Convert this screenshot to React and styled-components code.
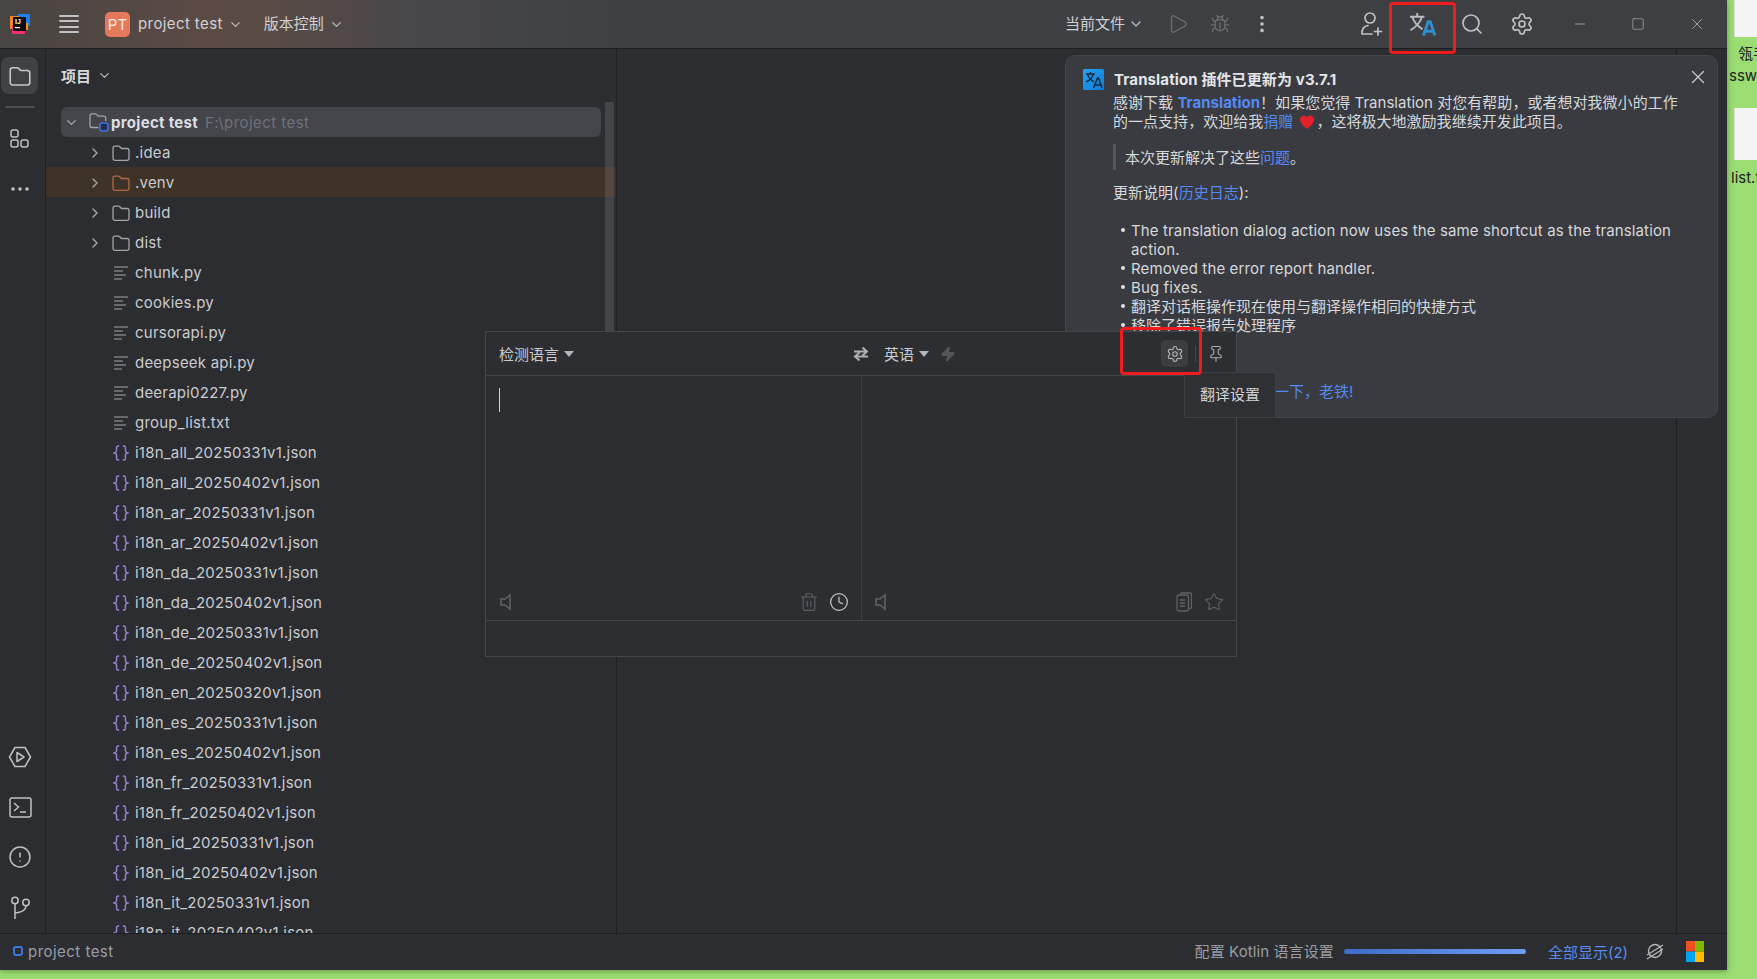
import React from 'react';
import styled, { createGlobalStyle } from 'styled-components';
import { Play, Bug, EllipsisVertical, Search, Settings, Minus, Square, X, ChevronDown, ChevronRight, CircleAlert, Trash2, Clock, Star, Pin, Zap } from 'lucide-react';

const FONT = '"Inter","Noto Sans CJK SC",sans-serif';

const Global = createGlobalStyle`
  html, body { margin: 0; padding: 0; height: 100%; overflow: hidden; background: #9bdd73; }
  body { font-family: ${FONT}; }
  #root { height: 100%; }
  * { box-sizing: border-box; }
  svg { flex: none; }
`;

const Page = styled.div`
  display: flex;
  width: 1757px;
  height: 979px;
  background: #9bdd73;
  overflow: hidden;
`;
const Win = styled.div`
  position: relative;
  flex: 0 0 1727px;
  height: 970px;
  display: flex;
  flex-direction: column;
  background: #2b2d30;
  color: #c6c8ce;
  font-size: 15px;
  box-shadow: 0 1px 6px rgba(30, 60, 20, 0.45);
  overflow: hidden;
`;
const Desktop = styled.div`
  position: relative;
  flex: 1;
  overflow: hidden;
  color: #222;
  font-size: 15px;
`;
const Thumb = styled.div`
  position: absolute;
  left: 7px;
  width: 30px;
  top: ${p => p.$top}px;
  height: ${p => p.$h}px;
  background: #f4f4f4;
  border-left: 1px solid #ddd;
`;
const DeskLabel = styled.span`
  position: absolute;
  left: ${p => p.$left}px;
  top: ${p => p.$top}px;
  line-height: 20px;
  white-space: nowrap;
`;

/* title bar */
const TitleBar = styled.header`
  flex: 0 0 49px;
  display: flex;
  align-items: center;
  padding-left: 10px;
  border-bottom: 1px solid #1e1f22;
  background: linear-gradient(90deg, #474442 0, #5b4a44 200px, #5a4b45 260px, #47474a 420px, #3d3f43 640px, #3d3f43 100%);
  color: #cfd1d5;
`;
const Hamburger = styled.span`
  flex: none;
  margin-left: 29px;
  width: 20px;
  height: 19px;
  display: flex;
  flex-direction: column;
  justify-content: space-between;
  & > i { display: block; height: 2px; background: #bfc1c5; border-radius: 1px; }
`;
const Avatar = styled.span`
  flex: none;
  margin-left: 26px;
  width: 25px;
  height: 25px;
  border-radius: 5px;
  background: #e5795c;
  color: #fbe9e2;
  font-size: 15px;
  display: flex;
  align-items: center;
  justify-content: center;
`;
const TitleText = styled.span`
  flex: none;
  margin-left: ${p => p.$ml || 0}px;
  white-space: nowrap;
  line-height: 20px;
  ${p => p.$ls ? `letter-spacing: ${p.$ls}px;` : ''}
`;
const Caret = styled(ChevronDown)`
  margin-left: ${p => p.$ml || 4}px;
  color: #b8babe;
  flex: none;
`;
const TitleIcon = styled.span`
  position: relative;
  flex: 0 0 ${p => p.$w}px;
  display: flex;
  align-items: center;
  justify-content: center;
  color: ${p => p.$dim ? '#6c6e72' : '#bfc1c5'};
`;
const TitleSpacer = styled.div`flex: 0 0 ${p => p.$w}px;`;
const TitlePush = styled.div`flex: 1;`;

/* main row */
const Main = styled.div`
  flex: 1;
  min-height: 0;
  display: flex;
`;
const Rail = styled.nav`
  flex: 0 0 46px;
  display: flex;
  flex-direction: column;
  align-items: center;
  padding: 8px 5px 0 0;
  border-right: 1px solid #1e1f22;
  color: #bfc1c5;
`;
const RailActive = styled.span`
  width: 37px;
  height: 37px;
  border-radius: 8px;
  background: #404246;
  display: flex;
  align-items: center;
  justify-content: center;
  margin-left: -1px;
`;
const RailRule = styled.i`
  display: block;
  width: 30px;
  height: 2px;
  margin-top: 12px;
  background: #4b4d51;
`;
const RailBtn = styled.span`
  display: flex;
  align-items: center;
  justify-content: center;
  height: 24px;
  margin-top: ${p => p.$mt || 0}px;
`;
const RailPush = styled.div`flex: 1;`;
const RailFoot = styled.div`flex: 0 0 14px;`;

const Panel = styled.section`
  position: relative;
  flex: 0 0 571px;
  display: flex;
  flex-direction: column;
  border-right: 1px solid #1e1f22;
  overflow: hidden;
`;
const PanelHead = styled.div`
  flex: 0 0 58px;
  display: flex;
  align-items: center;
  padding: 0 0 6px 15px;
  font-weight: 600;
  color: #d6d8dc;
`;
const Tree = styled.div`
  flex: 1;
  min-height: 0;
  overflow: hidden;
  letter-spacing: 0.22px;
`;
const Row = styled.div`
  height: 30px;
  display: flex;
  align-items: center;
  white-space: nowrap;
  padding-left: ${p => p.$pad}px;
  padding-top: ${p => p.$root ? 0 : 2}px;
  margin: ${p => p.$root ? '0 15px 0 15px' : '0'};
  border-radius: ${p => p.$root ? '6px' : '0'};
  background: ${p => p.$root ? '#43454a' : p.$tint ? '#3f3226' : 'transparent'};
  color: #c9cbd0;
`;
const RootName = styled.span`
  font-weight: 700;
  color: #dddfe3;
  margin-left: 2px;
  letter-spacing: 0.3px;
`;
const RootPath = styled.span`
  margin-left: 7px;
  color: #6f7278;
  letter-spacing: 0.45px;
`;
const Slot = styled.span`
  flex: 0 0 ${p => p.$w}px;
  display: flex;
  justify-content: ${p => p.$pl ? 'flex-start' : 'center'};
  padding-left: ${p => p.$pl || 0}px;
  align-items: center;
  color: ${p => p.$c || '#a9abb0'};
`;
const ScrollThumb = styled.div`
  position: absolute;
  right: 2px;
  top: 53px;
  width: 9px;
  height: 240px;
  background: rgba(120, 122, 128, 0.32);
`;
const Editor = styled.div`
  flex: 1;
  display: flex;
  justify-content: flex-end;
`;
const Stripe = styled.aside`
  flex: 0 0 51px;
  border-left: 1px solid #1e1f22;
`;

/* status bar */
const Status = styled.footer`
  flex: 0 0 37px;
  display: flex;
  align-items: center;
  padding: 0 0 2px 13px;
  border-top: 1px solid #1e1f22;
  background: #2b2d30;
  color: #9a9da3;
`;
const ProjDot = styled.i`
  display: block;
  width: 10px;
  height: 10px;
  border: 2px solid #3d74e0;
  border-radius: 3px;
  margin-right: 5px;
`;
const StatusName = styled.span`letter-spacing: 0.47px;`;
const StatusMsg = styled.span`
  letter-spacing: 0.1px;
  margin-top: -2px;
`;
const StatusPush = styled.div`flex: 1;`;
const Progress = styled.div`
  width: 182px;
  height: 5px;
  margin: 0 22px 0 10px;
  border-radius: 3px;
  background: linear-gradient(90deg, #3d6cc9, #6f9df2);
`;
const ShowAll = styled.span`
  color: #5a8cf0;
  margin-right: 18px;
`;
const StatusIcon = styled.span`
  display: flex;
  margin-right: ${p => p.$mr}px;
  color: #b4b6ba;
`;

/* notification */
const Note = styled.aside`
  position: absolute;
  left: 1065px;
  top: 55px;
  width: 653px;
  height: 363px;
  padding: 13px 16px 0 17px;
  background: #393b40;
  border-radius: 10px;
  border: 1px solid #43454a;
  color: #d6d8dc;
  font-size: 15px;
  line-height: 19px;
`;
const NoteHead = styled.div`
  display: flex;
  align-items: center;
  height: 20px;
  font-weight: 700;
  color: #e4e6ea;
  letter-spacing: 0.12px;
`;
const NoteLogo = styled.span`
  flex: 0 0 21px;
  height: 21px;
  margin: 1px 10px 0 0;
  display: flex;
`;
const NoteClose = styled(X)`
  position: absolute;
  right: 8px;
  top: 10px;
  color: #c4c6ca;
`;
const NoteBody = styled.div`padding-left: 30px;`;
const Para = styled.p`
  margin: ${p => p.$mt ?? 0}px 0 0;
  letter-spacing: 0.03px;
`;
const Link = styled.a`
  color: #548af7;
  font-weight: ${p => p.$bold ? 700 : 400};
`;
const Quote = styled.blockquote`
  margin: 13px 0 0;
  height: 26px;
  display: flex;
  align-items: center;
  padding-left: 9px;
  border-left: 3px solid #54565a;
`;
const Bullets = styled.ul`
  margin: 19px 0 0;
  padding: 0 0 0 18px;
  list-style: none;
`;
const Bullet = styled.li`
  position: relative;
  letter-spacing: ${p => p.$latin ? 0.13 : 0}px;
  &::before {
    content: '';
    position: absolute;
    left: -10px;
    top: 7px;
    width: 4px;
    height: 4px;
    border-radius: 50%;
    background: #dfe1e5;
  }
`;
const Kudos = styled.p`
  margin: 47px 0 0;
  padding-left: 161px;
  color: #548af7;
`;
const Heart = styled.svg`
  vertical-align: -3px;
  margin: 0 1px 0 6px;
`;

/* translation dialog */
const Dialog = styled.section`
  position: absolute;
  left: 485px;
  top: 331px;
  width: 752px;
  height: 326px;
  display: flex;
  flex-direction: column;
  background: #2c2e32;
  border: 1px solid #44464a;
  color: #c9cbd0;
`;
const DialogHead = styled.div`
  flex: 0 0 44px;
  display: flex;
  align-items: center;
  padding-left: 13px;
  border-bottom: 1px solid #44464a;
`;
const SourceLang = styled.div`
  flex: 0 0 353px;
  display: flex;
  align-items: center;
`;
const Tri = styled.i`
  display: block;
  width: 0;
  height: 0;
  margin: 0 0 0 5px;
  border-left: 5px solid transparent;
  border-right: 5px solid transparent;
  border-top: 6px solid #b4b6ba;
`;
const SwapIcon = styled.span`
  flex: 0 0 18px;
  display: flex;
  margin-right: 14px;
  color: #aeb0b4;
`;
const Bolt = styled(Zap)`
  margin-left: 11px;
  color: #55575b;
  fill: #55575b;
`;
const HeadPush = styled.div`flex: 1;`;
const GearBtn = styled.span`
  width: 27px;
  height: 27px;
  border-radius: 5px;
  background: #3b3d41;
  display: flex;
  align-items: center;
  justify-content: center;
  color: #b4b6ba;
`;
const HeadRule = styled.i`
  display: block;
  width: 1px;
  height: 16px;
  margin-left: 7px;
  background: #45474b;
`;
const PinBtn = styled(Pin)`
  margin: 0 11px;
  color: #a9abaf;
`;
const Panes = styled.div`
  flex: 1;
  display: flex;
  min-height: 0;
`;
const Pane = styled.div`
  flex: 1;
  display: flex;
  flex-direction: column;
  justify-content: flex-end;
  position: relative;
  & + & { border-left: 1px solid #3e4044; }
`;
const TextCaret = styled.i`
  position: absolute;
  left: 13px;
  top: 12px;
  width: 1px;
  height: 24px;
  background: #d0d2d6;
`;
const PaneFoot = styled.div`
  display: flex;
  align-items: center;
  height: 20px;
  margin-bottom: 8px;
  padding: 0 12px 0 ${p => p.$pl}px;
  color: #5f6165;
`;
const FootPush = styled.div`flex: 1;`;
const TrashIcon = styled(Trash2)`margin-right: -1px;`;
const ClockIcon = styled(Clock)`
  margin-left: 11px;
  color: #c2c4c8;
`;
const CopySlot = styled.span`
  display: flex;
  margin-right: 12px;
`;
const DialogFoot = styled.div`
  flex: 0 0 36px;
  border-top: 1px solid #44464a;
`;

const Tip = styled.div`
  position: absolute;
  left: 1184px;
  top: 372px;
  width: 92px;
  height: 46px;
  padding-bottom: 4px;
  display: flex;
  align-items: center;
  justify-content: center;
  background: #2e3034;
  border: 1px solid #3f4145;
  color: #d0d2d6;
`;
const RedBox = styled.div`
  position: absolute;
  left: ${p => p.$x}px;
  top: ${p => p.$y}px;
  width: ${p => p.$w}px;
  height: ${p => p.$h}px;
  border: 3.5px solid #ee1c1c;
  border-radius: 4px;
  pointer-events: none;
`;

/* drawn icons */
const Logo = () => (
  <svg width="20" height="20" viewBox="0 0 20 20">
    <rect x="8" y="0" width="12" height="12" rx="1" fill="#1f7ff0" />
    <rect x="0" y="2" width="9" height="13" fill="#f68a1e" />
    <rect x="2" y="11" width="13" height="9" rx="1" fill="#f2316d" />
    <rect x="12" y="9" width="6" height="7" fill="#f68a1e" />
    <rect x="3" y="3" width="13" height="14" fill="#0b0b0f" />
    <text x="5" y="10" fontSize="7" fontWeight="700" fill="#fff" fontFamily="Liberation Sans, sans-serif">IJ</text>
    <rect x="5" y="13" width="5" height="1.2" fill="#fff" />
  </svg>
);
const FolderIcon = ({ size = 18, color = '#a3a5a9' }) => (
  <svg width={size} height={size} viewBox="0 0 18 18" fill="none" stroke={color} strokeWidth="1.3">
    <path d="M1 4.2C1 3 1.8 2.2 3 2.2h3.4c.6 0 1 .2 1.4.6L9.5 4.5H15c1.2 0 2 .8 2 2v7.8c0 1.2-.8 2-2 2H3c-1.2 0-2-.8-2-2z" />
  </svg>
);
const RootIcon = () => (
  <svg width="20" height="20" viewBox="0 0 20 20" fill="none">
    <path d="M9.500 15.500H2.700c-1 0-1.700-.8-1.700-1.800V3.500C1 2.500 1.700 1.800 2.700 1.800h3.500c.6 0 1 .2 1.300.6l1.700 1.700h5.700c1 0 1.800.8 1.800 1.800v3" stroke="#a3a5a9" strokeWidth="1.300" />
    <rect x="11" y="11" width="8" height="8" rx="2.200" fill="#23304f" stroke="#3d74e0" strokeWidth="1.600" />
  </svg>
);
const FileLines = () => (
  <svg width="16" height="16" viewBox="0 0 16 16" stroke="#a3a5a9" strokeWidth="1.2">
    <path d="M1 2h14M1 6h9M1 10h12M1 14h8" />
  </svg>
);
const JsonIcon = () => (
  <svg width="16" height="18" viewBox="0 0 18 19" fill="none" stroke="#9a7ed4" strokeWidth="1.7">
    <path d="M7 1.500H6c-1.300 0-2 .7-2 2v3.500c0 1-.7 2-2.500 2.500C3.300 10 4 11 4 12v3.500c0 1.300.7 2 2 2h1" />
    <path d="M11 1.500h1c1.300 0 2 .7 2 2v3.500c0 1 .7 2 2.500 2.500C14.700 10 14 11 14 12v3.500c0 1.300-.7 2-2 2h-1" />
  </svg>
);
const StructureIcon = () => (
  <svg width="22" height="24" viewBox="0 0 22 24" fill="none" stroke="#bfc1c5" strokeWidth="1.5">
    <rect x="2" y="3" width="7" height="7" rx="2" />
    <rect x="2" y="13" width="7" height="7" rx="2" />
    <rect x="12" y="13" width="7" height="7" rx="2" />
  </svg>
);
const DotsIcon = () => (
  <svg width="20" height="6" viewBox="0 0 20 6" fill="#bfc1c5">
    <circle cx="3" cy="3" r="1.8" /><circle cx="10" cy="3" r="1.8" /><circle cx="17" cy="3" r="1.8" />
  </svg>
);
const RunIcon = () => (
  <svg width="24" height="22" viewBox="0 0 24 22" fill="none" stroke="#bfc1c5" strokeWidth="1.5" strokeLinejoin="round">
    <path d="M7 1.500h10l5.500 9.500L17 20.500H7L1.500 11z" />
    <path d="M9 6.500l7 4.500-7 4.500z" />
  </svg>
);
const TerminalIcon = () => (
  <svg width="23" height="21" viewBox="0 0 23 21" fill="none" stroke="#bfc1c5" strokeWidth="1.5">
    <rect x="1" y="1" width="21" height="19" rx="2" />
    <path d="M5 6l4.500 4L5 14M11 15h6" />
  </svg>
);
const GitIcon = () => (
  <svg width="20" height="23" viewBox="0 0 20 23" fill="none" stroke="#bfc1c5" strokeWidth="1.5">
    <circle cx="5" cy="4.500" r="3.200" /><circle cx="16" cy="6.500" r="3.200" />
    <path d="M5 8v15M16 10c0 4-5 6.500-11 7" />
  </svg>
);
const UserPlusIcon = () => (
  <svg width="24" height="26" viewBox="0 0 24 26" fill="none" stroke="#bfc1c5" strokeWidth="1.7" strokeLinecap="round">
    <circle cx="10" cy="7" r="5" />
    <path d="M2 23c-.6-4 1.500-8 6-8.500M2 23h10M18 17v7M14.500 20.500h7" />
  </svg>
);
const TranslateIcon = () => (
  <svg width="27" height="24" viewBox="0 0 28 25" fill="none">
    <path d="M1 5h15M8.500 1v4M3.500 5c1 5 6 10 10.500 13M13.500 5C12 10 7 16 1.500 19" stroke="#b9bbbf" strokeWidth="2" />
    <path d="M15 24.500L20 10h2l5 14.500M17 20h8" stroke="#2f8fcf" strokeWidth="3" />
  </svg>
);
const NoteLogoArt = () => (
  <svg width="21" height="21" viewBox="0 0 21 21">
    <defs>
      <linearGradient id="nl" x1="0" y1="0" x2="1" y2="1">
        <stop offset="0" stopColor="#27a4ef" /><stop offset="1" stopColor="#0f7bd8" />
      </linearGradient>
    </defs>
    <rect width="21" height="21" rx="1.500" fill="url(#nl)" />
    <path d="M3 5h9M7.500 3v2M4.500 5c.6 3 3.500 6 6.500 8M10.500 5C9.500 8 6.500 11.500 3 13" stroke="#10283c" strokeWidth="1.300" fill="none" />
    <path d="M10.500 19L14.500 9h1L19 19M12 16h5.500" stroke="#10283c" strokeWidth="1.500" fill="none" />
  </svg>
);
const SwapArt = () => (
  <svg width="18" height="18" viewBox="0 0 18 18" fill="none" stroke="currentColor" strokeWidth="2">
    <path d="M2 6.500h12M10.500 2.500L15 6.500l-4.500 4M16 11.500H4M7.500 7.500L3 11.500l4.500 4" />
  </svg>
);
const SpeakerArt = () => (
  <svg width="14" height="20" viewBox="0 0 14 20" fill="none" stroke="currentColor" strokeWidth="1.600">
    <path d="M2 7h4l5-4v14l-5-4H2z" />
  </svg>
);
const CopyArt = () => (
  <svg width="16" height="22" viewBox="0 0 16 22" fill="none" stroke="currentColor" strokeWidth="1.300">
    <path d="M5 3V2h9c1 0 1.500.5 1.500 1.500V16c0 1-.5 1.500-1.500 1.500h-1" />
    <rect x="1" y="4" width="11.500" height="16" rx="2" />
    <path d="M4 9h5M4 12h5M4 15h5" />
  </svg>
);
const NoPowerIcon = () => (
  <svg width="18" height="18" viewBox="0 0 18 18" fill="none" stroke="currentColor" strokeWidth="1.400">
    <circle cx="9" cy="9" r="6.500" />
    <path d="M1 13L17 3M1 17L17 7" />
  </svg>
);
const WindowsIcon = () => (
  <svg width="18" height="21" viewBox="0 0 18 21">
    <rect width="9" height="10.500" fill="#f25022" />
    <rect x="9" width="9" height="10.500" fill="#7fba00" />
    <rect y="10.500" width="9" height="10.500" fill="#00a4ef" />
    <rect x="9" y="10.500" width="9" height="10.500" fill="#ffb900" />
  </svg>
);

const folders = [['.idea'], ['.venv', true], ['build'], ['dist']];
const plain = ['chunk.py', 'cookies.py', 'cursorapi.py', 'deepseek api.py', 'deerapi0227.py', 'group_list.txt'];
const json = [
  'i18n_all_20250331v1.json', 'i18n_all_20250402v1.json', 'i18n_ar_20250331v1.json', 'i18n_ar_20250402v1.json',
  'i18n_da_20250331v1.json', 'i18n_da_20250402v1.json', 'i18n_de_20250331v1.json', 'i18n_de_20250402v1.json',
  'i18n_en_20250320v1.json', 'i18n_es_20250331v1.json', 'i18n_es_20250402v1.json', 'i18n_fr_20250331v1.json',
  'i18n_fr_20250402v1.json', 'i18n_id_20250331v1.json', 'i18n_id_20250402v1.json', 'i18n_it_20250331v1.json',
  'i18n_it_20250402v1.json',
];

export default function App() {
  return (
    <Page>
      <Global />
      <Win>
        <TitleBar>
          <Logo />
          <Hamburger><i /><i /><i /><i /></Hamburger>
          <Avatar>PT</Avatar>
          <TitleText $ml={8} $ls={0.4}>project test</TitleText>
          <Caret size={15} $ml={5} />
          <TitleText $ml={21}>版本控制</TitleText>
          <Caret size={15} $ml={5} />
          <TitlePush />
          <TitleText>当前文件</TitleText>
          <Caret size={16} $ml={3} />
          <TitleSpacer $w={14} />
          <TitleIcon $w={40} $dim><Play size={22} strokeWidth={1.4} /></TitleIcon>
          <TitleIcon $w={44} $dim><Bug size={20} strokeWidth={1.5} /></TitleIcon>
          <TitleIcon $w={40}><EllipsisVertical size={22} strokeWidth={2} /></TitleIcon>
          <TitleSpacer $w={65} />
          <TitleIcon $w={50}><UserPlusIcon /></TitleIcon>
          <TitleIcon $w={50}><TranslateIcon /></TitleIcon>
          <TitleIcon $w={50}><Search size={24} strokeWidth={1.7} /></TitleIcon>
          <TitleIcon $w={49}><Settings size={24} strokeWidth={1.7} /></TitleIcon>
          <TitleSpacer $w={5} />
          <TitleIcon $w={58}><Minus size={16} strokeWidth={1} /></TitleIcon>
          <TitleIcon $w={58}><Square size={14} strokeWidth={1} /></TitleIcon>
          <TitleIcon $w={59}><X size={18} strokeWidth={1} /></TitleIcon>
          <TitleSpacer $w={1} />
        </TitleBar>

        <Main>
          <Rail>
            <RailActive><FolderIcon size={22} color="#c6c8cc" /></RailActive>
            <RailRule />
            <RailBtn $mt={19}><StructureIcon /></RailBtn>
            <RailBtn $mt={26}><DotsIcon /></RailBtn>
            <RailPush />
            <RailBtn><RunIcon /></RailBtn>
            <RailBtn $mt={26}><TerminalIcon /></RailBtn>
            <RailBtn $mt={26}><CircleAlert size={24} strokeWidth={1.5} /></RailBtn>
            <RailBtn $mt={26}><GitIcon /></RailBtn>
            <RailFoot />
          </Rail>

          <Panel>
            <PanelHead>项目<Caret size={15} $ml={6} /></PanelHead>
            <Tree>
              <Row $root $pad={2}>
                <Slot $w={17}><ChevronDown size={15} /></Slot>
                <Slot $w={28} $pl={9}><RootIcon /></Slot>
                <RootName>project test</RootName>
                <RootPath>F:\project test</RootPath>
              </Row>
              {folders.map(([name, tint]) => (
                <Row key={name} $pad={40} $tint={tint}>
                  <Slot $w={18}><ChevronRight size={16} /></Slot>
                  <Slot $w={28} $pl={8}><FolderIcon color={tint ? '#b2694a' : '#a3a5a9'} /></Slot>
                  <TitleText $ml={3}>{name}</TitleText>
                </Row>
              ))}
              {plain.map(name => (
                <Row key={name} $pad={64}>
                  <Slot $w={22}><FileLines /></Slot>
                  <TitleText $ml={3}>{name}</TitleText>
                </Row>
              ))}
              {json.map(name => (
                <Row key={name} $pad={64}>
                  <Slot $w={22}><JsonIcon /></Slot>
                  <TitleText $ml={3}>{name}</TitleText>
                </Row>
              ))}
            </Tree>
            <ScrollThumb />
          </Panel>

          <Editor><Stripe /></Editor>
        </Main>

        <Status>
          <ProjDot />
          <StatusName>project test</StatusName>
          <StatusPush />
          <StatusMsg>配置 Kotlin 语言设置</StatusMsg>
          <Progress />
          <ShowAll>全部显示(2)</ShowAll>
          <StatusIcon $mr={22}><NoPowerIcon /></StatusIcon>
          <StatusIcon $mr={23}><WindowsIcon /></StatusIcon>
        </Status>

        <Note>
          <NoteClose size={22} strokeWidth={1.4} />
          <NoteHead>
            <NoteLogo><NoteLogoArt /></NoteLogo>
            Translation 插件已更新为 v3.7.1
          </NoteHead>
          <NoteBody>
            <Para $mt={4}>
              感谢下载 <Link $bold>Translation</Link>！如果您觉得 Translation 对您有帮助，或者想对我微小的工作<br />
              的一点支持，欢迎给我<Link>捐赠</Link>
              <Heart width="16" height="16" viewBox="0 0 16 16"><path d="M8 15C3 11 1 8.500 1 5.500 1 3 3 1.500 5 1.500c1.300 0 2.400.7 3 1.800.6-1.100 1.700-1.800 3-1.800 2 0 4 1.500 4 4 0 3-2 5.500-7 9.500z" fill="#e3202c" /></Heart>
              ，这将极大地激励我继续开发此项目。
            </Para>
            <Quote>本次更新解决了这些<Link>问题</Link>。</Quote>
            <Para $mt={13}>更新说明(<Link>历史日志</Link>):</Para>
            <Bullets>
              <Bullet $latin>The translation dialog action now uses the same shortcut as the translation action.</Bullet>
              <Bullet $latin>Removed the error report handler.</Bullet>
              <Bullet $latin>Bug fixes.</Bullet>
              <Bullet>翻译对话框操作现在使用与翻译操作相同的快捷方式</Bullet>
              <Bullet>移除了错误报告处理程序</Bullet>
            </Bullets>
            <Kudos>一下，老铁!</Kudos>
          </NoteBody>
        </Note>

        <Dialog>
          <DialogHead>
            <SourceLang>检测语言<Tri /></SourceLang>
            <SwapIcon><SwapArt /></SwapIcon>
            英语<Tri />
            <Bolt size={16} />
            <HeadPush />
            <GearBtn><Settings size={18} strokeWidth={1.5} /></GearBtn>
            <HeadRule />
            <PinBtn size={18} strokeWidth={1.5} />
          </DialogHead>
          <Panes>
            <Pane>
              <TextCaret />
              <PaneFoot $pl={13}>
                <SpeakerArt />
                <FootPush />
                <TrashIcon size={20} strokeWidth={1.3} />
                <ClockIcon size={20} strokeWidth={1.5} />
              </PaneFoot>
            </Pane>
            <Pane>
              <PaneFoot $pl={12}>
                <SpeakerArt />
                <FootPush />
                <CopySlot><CopyArt /></CopySlot>
                <Star size={20} strokeWidth={1.3} />
              </PaneFoot>
            </Pane>
          </Panes>
          <DialogFoot />
        </Dialog>
        <Tip>翻译设置</Tip>
        <RedBox $x={1389} $y={2} $w={67} $h={52} />
        <RedBox $x={1120} $y={327} $w={82} $h={48} />
      </Win>

      <Desktop>
        <Thumb $top={0} $h={37} />
        <DeskLabel $left={11} $top={44}>瓴手</DeskLabel>
        <DeskLabel $left={2} $top={66}>ssword</DeskLabel>
        <Thumb $top={108} $h={52} />
        <DeskLabel $left={4} $top={168}>list.txt</DeskLabel>
      </Desktop>
    </Page>
  );
}
